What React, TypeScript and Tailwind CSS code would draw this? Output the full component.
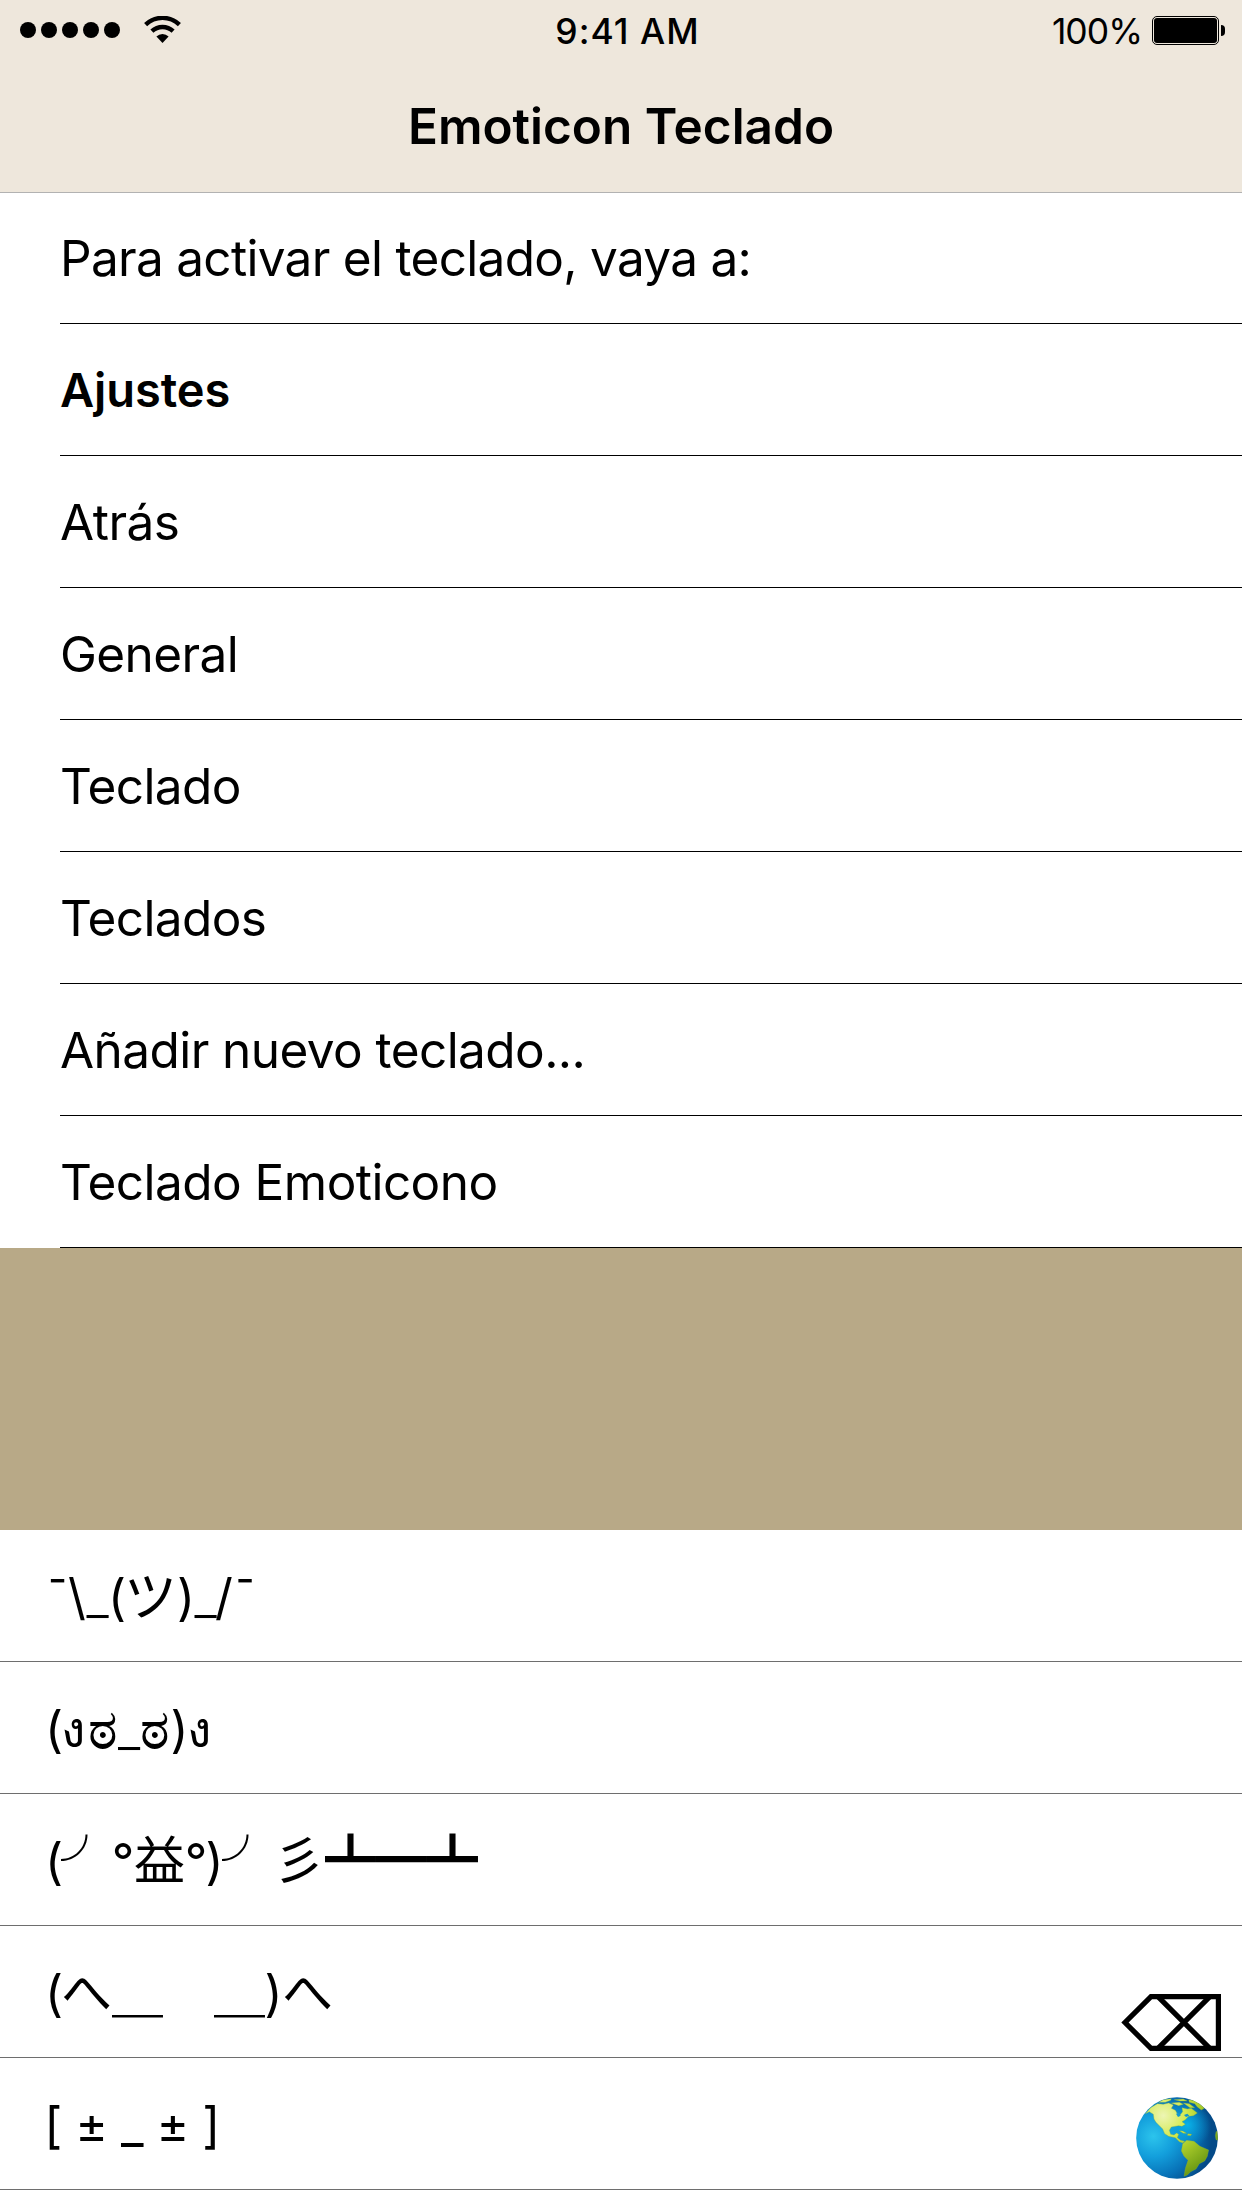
import React from "react";

const steps: { text: string; style: string }[] = [
  { text: "Para activar el teclado, vaya a:", style: "text-[49.5px] tracking-[-0.7px]" },
  { text: "Ajustes", style: "text-[47px] font-semibold tracking-[-0.1px]" },
  { text: "Atrás", style: "text-[49.5px] tracking-[-0.5px]" },
  { text: "General", style: "text-[49.5px] tracking-[-0.6px]" },
  { text: "Teclado", style: "text-[49.5px] tracking-[-0.6px]" },
  { text: "Teclados", style: "text-[49.5px] tracking-[-0.6px]" },
  { text: "Añadir nuevo teclado...", style: "text-[49.5px] tracking-[-0.57px]" },
  { text: "Teclado Emoticono", style: "text-[49.5px] tracking-[-0.54px]" },
];

// Each emoticon is a run of cells: the character and the width it takes.
const emoticons: [string, string][][] = [
  [
    ["¯", "w-[21px]"],
    ["\\", "w-[18px]"],
    ["_", "w-[23px] font-light"],
    ["(", "w-[16px]"],
    ["ツ", "w-[51px] text-[53px]"],
    [")", "w-[20px]"],
    ["_", "w-[19px] font-light"],
    ["/", "w-[18px]"],
    ["¯", "w-[24px]"],
  ],
  [
    ["(", "w-[14px]"],
    ["ง", "w-[23px] text-[50px] font-medium"],
    ["ಠ", "w-[37px] text-[56px] font-medium"],
    ["_", "w-[16px] font-light"],
    ["ಠ", "w-[35px] text-[56px] font-medium"],
    [")", "w-[15px]"],
    ["ง", "w-[23px] text-[50px] font-medium"],
  ],
  [
    ["(", "w-[14px]"],
    ["╯", "w-[51px] text-[51px] pt-px"],
    ["°", "w-[22px]"],
    ["益", "w-[51px] text-[51px]"],
    ["°", "w-[22px]"],
    [")", "w-[15px]"],
    ["╯", "w-[51px] text-[51px] pt-px"],
    ["彡", "w-[52px] text-[51px]"],
    ["┻━┻", "w-[153px] text-[51px]"],
  ],
  [
    ["(", "w-[14px]"],
    ["へ", "w-[51px] text-[51px]"],
    ["＿", "w-[51px] text-[51px] font-bold"],
    ["　", "w-[51px] text-[51px]"],
    ["＿", "w-[51px] text-[51px] font-bold"],
    [")", "w-[17px]"],
    ["へ", "w-[51px] text-[51px]"],
  ],
  [["[ ± _ ± ]", "w-[170px] tracking-[-0.5px]"]],
];

function WifiIcon() {
  return (
    <svg className="mb-[3px] ml-[24px] h-[27px] w-[37px]" viewBox="0 0 37 27" fill="none">
      <path d="M1.6 8.6A24.5 24.5 0 0 1 35.4 8.6" stroke="#000" strokeWidth="4.4" />
      <path d="M7.9 15.2A15.5 15.5 0 0 1 29.1 15.2" stroke="#000" strokeWidth="4.4" />
      <path d="M18.5 27L12.4 20.6A8.6 8.6 0 0 1 24.6 20.6Z" fill="#000" />
    </svg>
  );
}

function BatteryIcon() {
  return (
    <div className="mb-px ml-[10px] flex items-center gap-[2px]">
      <div className="h-[29px] w-[67px] rounded-[5px] border border-black p-px">
        <div className="h-full w-full rounded-[3px] bg-black" />
      </div>
      <div className="h-[11px] w-[4px] rounded-r-full bg-black" />
    </div>
  );
}

function DeleteIcon() {
  return (
    <svg className="h-[57px] w-[100px]" viewBox="0 0 100 57" fill="none" stroke="#000" strokeWidth="5.2">
      <path d="M30 2.6H97.4V54.4H30L4 28.5Z" />
      <path d="M37 2.6L88.8 54.4M88.8 2.6L37 54.4" />
    </svg>
  );
}

function GlobeIcon() {
  return (
    <svg className="h-[82px] w-[82px]" viewBox="108 412 246 246">
      <defs>
        <radialGradient id="sea" gradientUnits="userSpaceOnUse" cx="160" cy="530" r="175">
          <stop offset="0" stopColor="#2cc4ec" />
          <stop offset="0.35" stopColor="#139fdc" />
          <stop offset="0.7" stopColor="#0873b8" />
          <stop offset="1" stopColor="#044a88" />
        </radialGradient>
        <radialGradient id="gulf" gradientUnits="userSpaceOnUse" cx="262" cy="496" r="72">
          <stop offset="0" stopColor="#08b4ea" stopOpacity="0.95" />
          <stop offset="1" stopColor="#08a0dc" stopOpacity="0" />
        </radialGradient>
        <radialGradient id="land" gradientUnits="userSpaceOnUse" cx="190" cy="468" r="190">
          <stop offset="0" stopColor="#edf5b4" />
          <stop offset="0.35" stopColor="#d3ea50" />
          <stop offset="0.6" stopColor="#a9cc2a" />
          <stop offset="1" stopColor="#6c9a14" />
        </radialGradient>
        <clipPath id="disc">
          <circle cx="231" cy="535" r="122.5" />
        </clipPath>
      </defs>
      <g clipPath="url(#disc)">
        <rect x="108" y="412" width="246" height="246" fill="url(#sea)" />
        <rect x="108" y="412" width="246" height="246" fill="url(#gulf)" />
        <g fill="url(#land)" stroke="#86b040" strokeWidth="1" strokeLinejoin="round">
          <path d="M136 462L152 444L172 432L190 434L206 430L220 436L214 446L226 452L232 462L240 466L248 456L246 444L262 448L274 446L292 460L280 468L266 470L256 480L246 486L256 494L246 500L236 498L214 502L208 512L212 524L222 526L230 520L236 524L232 534L242 542L254 545L248 550L238 546L226 534L206 530L194 522L188 508L176 496L168 488L162 478L160 464L148 456Z" />
          <path d="M248 552L260 542L282 545L300 560L326 571L322 590L314 604L298 612L288 628L272 636L262 646L252 650L256 626L264 602L252 590L244 574Z" />
          <path d="M266 420L290 424L308 434L313 446L304 451L292 442L284 432L268 428Z" />
          <path d="M176 428L190 420L214 417L212 422L196 428ZM222 420L250 418L262 424L240 424ZM214 430L238 428L250 434L236 438ZM250 430L268 432L284 444L270 444Z" />
          <path d="M238 513L248 514L260 521L250 521ZM264 522L275 524L272 528L262 527Z" />
          <path d="M348 516L354 514V542L348 540L346 528Z" />
        </g>
        <path d="M228 462L238 460L242 468L234 472ZM252 466L262 462L268 468L258 472Z" fill="#1296d0" />
      </g>
    </svg>
  );
}

export default function App() {
  return (
    <div className="flex h-[2208px] w-[1242px] flex-col overflow-hidden bg-white font-['Inter','Noto_Sans_CJK_JP',sans-serif] text-black">
      <header className="h-[193px] border-b border-[#b2b2b2] bg-[#eee7dc]">
        <div className="grid h-[62px] grid-cols-3 items-center text-[35.5px] leading-none">
          <div className="flex items-center pl-[20px]">
            <div className="mb-[2px] flex gap-[5px]">
              {[0, 1, 2, 3, 4].map((dot) => (
                <span key={dot} className="size-[16px] rounded-full bg-black" />
              ))}
            </div>
            <WifiIcon />
          </div>
          <span className="pt-px pl-[13px] text-center font-medium tracking-[1px]">9:41 AM</span>
          <div className="flex items-center justify-end pr-[17px]">
            <span className="pt-px tracking-[-1px]">100%</span>
            <BatteryIcon />
          </div>
        </div>
        <h1 className="flex h-[128px] items-center justify-center text-[49.5px] leading-[60px] font-semibold">
          Emoticon Teclado
        </h1>
      </header>

      <ul className="h-[1055px] pl-[60px]">
        {steps.map((step, i) => (
          <li
            key={step.text}
            className={`flex items-center border-b border-black leading-[60px] ${i === 0 ? "h-[131px]" : "h-[132px]"}`}
          >
            <span className={step.style}>{step.text}</span>
          </li>
        ))}
      </ul>

      <div className="h-[282px] bg-[#b8a987]" />

      <section className="relative">
        <ul>
          {emoticons.map((cells, row) => (
            <li key={row} className="flex h-[132px] items-center border-b border-[#6e6e6e] pt-[2px] pl-[47px] text-[49.5px] leading-[60px]">
              {cells.map(([char, style], i) => (
                <span key={i} className={`flex h-[60px] shrink-0 justify-center whitespace-pre ${style}`}>
                  {char}
                </span>
              ))}
            </li>
          ))}
        </ul>
        <button className="absolute top-[464px] right-[21px]" aria-label="Borrar">
          <DeleteIcon />
        </button>
        <button className="absolute top-[567px] right-[24px]" aria-label="Cambiar teclado">
          <GlobeIcon />
        </button>
      </section>
    </div>
  );
}
